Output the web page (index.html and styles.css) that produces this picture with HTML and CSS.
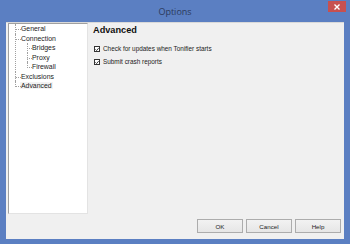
FILE: index.html
```html
<!DOCTYPE html>
<html>
<head>
<meta charset="utf-8">
<link rel="stylesheet" href="styles.css">
</head>
<body>
<div class="window">
  <div class="titlebar">
    <span class="title">Options</span>
    <span class="close"><svg width="6" height="6" viewBox="0 0 6 6"><path d="M0.5 0.5 L5.5 5.5 M5.5 0.5 L0.5 5.5" stroke="#fff" stroke-width="1.4"/></svg></span>
  </div>
  <div class="client">
    <div class="main">
      <div class="tree">
        <ul class="root">
          <li><span class="lbl">General</span></li>
          <li><span class="lbl">Connection</span>
            <ul class="sub">
              <li><span class="lbl">Bridges</span></li>
              <li><span class="lbl">Proxy</span></li>
              <li><span class="lbl">Firewall</span></li>
            </ul>
          </li>
          <li><span class="lbl">Exclusions</span></li>
          <li class="last"><span class="lbl sel">Advanced</span></li>
        </ul>
      </div>
      <div class="panel">
        <h1 class="heading">Advanced</h1>
        <label class="check"><span class="box"><svg width="5" height="5" viewBox="0 0 5 5"><path d="M0.5 2.3 L2 3.8 L4.6 0.8" fill="none" stroke="#222" stroke-width="1.1"/></svg></span>Check for updates when Tonifier starts</label>
        <label class="check"><span class="box"><svg width="5" height="5" viewBox="0 0 5 5"><path d="M0.5 2.3 L2 3.8 L4.6 0.8" fill="none" stroke="#222" stroke-width="1.1"/></svg></span>Submit crash reports</label>
      </div>
    </div>
    <div class="buttons">
      <button class="btn">OK</button>
      <button class="btn">Cancel</button>
      <button class="btn">Help</button>
    </div>
  </div>
</div>
</body>
</html>
```
FILE: styles.css
```css
* { box-sizing: border-box; }
html, body { margin: 0; padding: 0; }
body {
  width: 350px;
  height: 244px;
  background: #5b7fc2;
  font-family: "Liberation Sans", Arial, sans-serif;
  overflow: hidden;
}
.window {
  width: 350px;
  height: 244px;
  display: flex;
  flex-direction: column;
}
.titlebar {
  height: 22px;
  position: relative;
  display: flex;
  align-items: center;
  justify-content: center;
}
.title {
  font-family: "Open Sans", "Liberation Sans", sans-serif;
  font-size: 9px;
  color: #2b3a5c;
}
.close {
  position: absolute;
  left: 328px;
  top: 1px;
  width: 18px;
  height: 11px;
  background: #c75050;
  display: flex;
  align-items: center;
  justify-content: center;
}
.close svg { display: block; }
.client {
  margin: 0 6px 5px 6px;
  height: 217px;
  background: #f0f0f0;
  border-top: 1px solid #d9d9d9;
  display: flex;
  flex-direction: column;
}
.main {
  display: flex;
  padding: 0 0 0 2px;
}
.tree {
  width: 80px;
  height: 191px;
  background: #fff;
  border: 1px solid #a0a0a0;
  border-right-color: #e3e3e3;
  border-bottom-color: #e3e3e3;
  padding: 0 0 0 6px;
  font-size: 6.9px;
  color: #222;
}
.tree ul {
  list-style: none;
  margin: 0;
  padding: 0;
}
.tree li {
  position: relative;
  padding-left: 4px;
  line-height: 9.5px;
}
.tree .root > li {
  border-left: 1px dotted #a0a0a0;
}
.tree .root > li.last { border-left-color: transparent; }
.tree .root > li::before, .tree .sub > li::before {
  content: "";
  position: absolute;
  left: -1px;
  top: 0;
  width: 5px;
  height: 5px;
  border-left: 1px dotted #a0a0a0;
  border-bottom: 1px dotted #a0a0a0;
}
.tree .root > li::before { border-left-color: transparent; }
.tree .root > li.last::before { border-left-color: #a0a0a0; }
.tree .sub {
  margin-left: 7px;
}
.tree .sub > li {
  border-left: 1px dotted #a0a0a0;
  padding-left: 3px;
}
.tree .sub > li::before { width: 4px; border-left-color: transparent; }
.tree .sub > li:last-child { border-left-color: transparent; }
.tree .sub > li:last-child::before { border-left-color: #a0a0a0; }
.lbl { padding: 0 1px; }
.sel { background: #f3f3f3; }
.panel {
  flex: 1;
  padding: 1px 0 0 5px;
}
.heading {
  margin: 0;
  font-size: 9.2px;
  font-weight: bold;
  color: #111;
  line-height: 12px;
}
.check {
  display: flex;
  align-items: center;
  font-size: 6.4px;
  color: #222;
  line-height: 8px;
  margin-left: 1px;
}
.heading + .check { margin-top: 9px; }
.check + .check { margin-top: 5px; }
.box {
  width: 6px;
  height: 6px;
  border: 1px solid #333;
  background: #fff;
  margin-right: 3px;
  display: flex;
  align-items: center;
  justify-content: center;
}
.box svg { display: block; }
.buttons {
  display: flex;
  justify-content: flex-end;
  gap: 3px;
  margin-top: 5px;
  padding-right: 3px;
}
.btn {
  width: 46px;
  height: 14px;
  margin: 0;
  padding: 0;
  background: linear-gradient(#f2f2f2, #e6e6e6);
  border: 1px solid #acacac;
  border-radius: 0;
  font-family: "Liberation Sans", Arial, sans-serif;
  font-size: 6.2px;
  color: #222;
}
```
